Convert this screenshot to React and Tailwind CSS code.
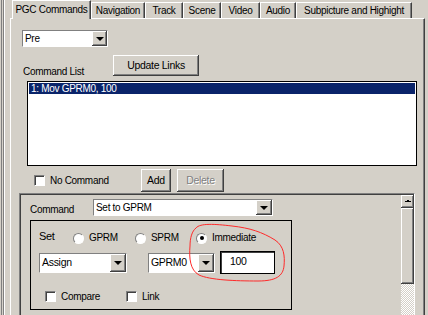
import React from "react";

const raised =
  "shadow-[inset_-1px_-1px_0_#404040,inset_1px_1px_0_#ffffff,inset_-2px_-2px_0_#808080]";
const sunken =
  "border border-t-[#808080] border-l-[#808080] border-r-white border-b-white";

function Arrow({ className = "" }) {
  return (
    <div className={`flex items-center justify-center bg-[#d4d0c8] ${raised} ${className}`}>
      <div className="w-0 h-0 border-l-[4px] border-r-[4px] border-t-[4px] border-l-transparent border-r-transparent border-t-black" />
    </div>
  );
}

function Combo({ className, text, arrowClass = "w-[16px]" }) {
  return (
    <div className={`flex bg-white ${sunken} ${className}`}>
      <div className="flex-1 pl-[2px] leading-none flex items-center overflow-hidden whitespace-nowrap">
        {text}
      </div>
      <Arrow className={arrowClass} />
    </div>
  );
}

function Check({ label, className = "" }) {
  return (
    <div className={`flex items-center gap-[5px] ${className}`}>
      <div className="w-[11px] h-[11px] bg-white border border-t-[#808080] border-l-[#808080] border-r-white border-b-white shadow-[inset_1px_1px_0_#404040]" />
      <span className="leading-none">{label}</span>
    </div>
  );
}

function Radio({ label, checked, className = "" }) {
  return (
    <div className={`flex items-center gap-[5px] ${className}`}>
      <div className="w-[11px] h-[11px] rounded-full bg-white border border-t-[#808080] border-l-[#808080] border-r-white border-b-white flex items-center justify-center">
        {checked && <div className="w-[4px] h-[4px] rounded-full bg-black" />}
      </div>
      <span className="leading-none">{label}</span>
    </div>
  );
}

function Btn({ className, children, disabled }) {
  return (
    <div
      className={`flex items-center justify-center bg-[#d4d0c8] ${raised} ${className} ${
        disabled ? "text-[#808080] [text-shadow:1px_1px_0_#ffffff]" : "text-black"
      }`}
    >
      {children}
    </div>
  );
}

const tabs = [
  ["Navigation", "w-[54px]"],
  ["Track", "w-[38px]"],
  ["Scene", "w-[38px]"],
  ["Video", "w-[39px]"],
  ["Audio", "w-[36px]"],
  ["Subpicture and Highight", "w-[116px]"],
];

export default function App() {
  return (
    <div
      className="relative w-[428px] h-[315px] overflow-hidden bg-[#d4d0c8] flex text-[10px] tracking-[-0.3px] text-black"
      style={{ fontFamily: '"Liberation Sans", Arial, sans-serif' }}
    >
      {/* left frame lines */}
      <div className="w-[10px] h-full flex shrink-0">
        <div className="w-px" />
        <div className="w-px bg-[#808080]" />
        <div className="w-px" />
        <div className="w-px bg-[#808080]" />
        <div className="w-px bg-white" />
      </div>

      <div className="flex flex-col w-[415px] shrink-0">
        {/* tab row */}
        <div className="flex h-[18px] pl-[2px] items-end">
          <div className="relative z-10 w-[79px] h-[19px] -mb-px bg-[#d4d0c8] border-l border-t border-white border-r border-r-[#404040] shadow-[inset_-1px_0_0_#808080] flex items-center justify-center pb-[2px]">
            PGC Commands
          </div>
          {tabs.map(([t, w]) => (
            <div
              key={t}
              className={`${w} h-[16px] border-l border-t border-white border-r border-r-[#404040] shadow-[inset_-1px_0_0_#808080] flex items-center justify-center shrink-0`}
            >
              {t}
            </div>
          ))}
        </div>

        {/* panel */}
        <div className="flex-1 flex flex-col border-t border-l border-white border-r border-r-[#404040] shadow-[inset_-1px_0_0_#808080]">
          <Combo className="ml-[11px] mt-[11px] w-[86px] h-[17px]" text="Pre" arrowClass="w-[15px]" />

          <div className="flex items-end mt-[8px] h-[21px]">
            <div className="ml-[12px] h-[10px] overflow-hidden leading-[12px] w-[90px]">
              Command List
            </div>
            <Btn className="w-[86px] h-[21px] text-[10.5px]">Update Links</Btn>
          </div>

          <div className="ml-[16px] mt-[5px] w-[390px] h-[85px] bg-white border border-black p-px">
            <div className="h-[11px] bg-[#0a246a] text-white leading-[11px] pl-[2px]">
              1: Mov GPRM0, 100
            </div>
          </div>

          <div className="flex items-center mt-[3px] h-[23px]">
            <Check label="No Command" className="ml-[23px] w-[107px]" />
            <Btn className="w-[30px] h-[23px] text-[10.5px]">Add</Btn>
            <Btn className="ml-[6px] w-[47px] h-[23px] text-[10.5px]" disabled>
              Delete
            </Btn>
          </div>

          {/* lower frame */}
          <div className="ml-[8px] mt-px w-[396px] flex-1 flex border-t border-l border-[#808080] border-r border-r-white shadow-[inset_1px_1px_0_#404040]">
            <div className="flex-1 flex flex-col pl-px pt-px">
              <div className="flex items-center mt-[4px] h-[17px]">
                <div className="ml-[9px] w-[63px] pt-[4px]">Command</div>
                <Combo className="w-[180px] h-[17px]" text="Set to GPRM" />
              </div>

              <div className="ml-[9px] mt-[4px] w-[262px] h-[90px] border border-black flex flex-col">
                <div className="flex items-center mt-[11px] h-[12px]">
                  <span className="ml-[8px] w-[34px] text-[11px] -mt-[3px]">Set</span>
                  <Radio label="GPRM" className="w-[62px]" />
                  <Radio label="SPRM" className="w-[61px]" />
                  <Radio label="Immediate" checked />
                </div>
                <div className="flex items-center mt-[7px]">
                  <Combo className="ml-[8px] w-[88px] h-[20px] text-[10.5px]" text="Assign" />
                  <Combo className="ml-[21px] w-[67px] h-[20px] text-[10.5px]" text="GPRM0" />
                  <div className="ml-[5px] w-[55px] h-[23px] bg-white border border-black shadow-[inset_1px_1px_0_#404040] pl-[9px] pt-[4px] text-[10.5px] leading-none">
                    100
                  </div>
                </div>
                <div className="flex items-center mt-[17px]">
                  <Check label="Compare" className="ml-[14px] w-[81px]" />
                  <Check label="Link" />
                </div>
              </div>
            </div>

            {/* scrollbar */}
            <div className="w-[13px] flex flex-col pt-px">
              <div className={`h-[13px] bg-[#d4d0c8] ${raised} flex items-center justify-center`}>
                <div className="w-[6px] h-px bg-black relative">
                  <div className="absolute left-[2px] -top-[1px] w-[2px] h-px bg-black" />
                </div>
              </div>
              <div className={`h-[76px] bg-[#d4d0c8] ${raised}`} />
              <div className="flex-1 bg-[repeating-conic-gradient(#ffffff_0%_25%,#d4d0c8_0%_50%)] bg-[length:2px_2px]" />
            </div>
          </div>
        </div>
      </div>

      {/* red annotation ellipse */}
      <svg
        className="absolute left-0 top-0 pointer-events-none"
        width="428"
        height="315"
        viewBox="0 0 428 315"
      >
        <path
          d="M196 228 C200 223 215 224 232 226 C250 228 262 232 275 240 C284 246 285 256 284 266 C283 276 276 281 258 281 C235 281 210 280 199 275 C190 270 189 258 190 246 C190 238 192 231 196 228 Z"
          fill="none"
          stroke="#ff2a2a"
          strokeWidth="1"
        />
      </svg>
    </div>
  );
}
